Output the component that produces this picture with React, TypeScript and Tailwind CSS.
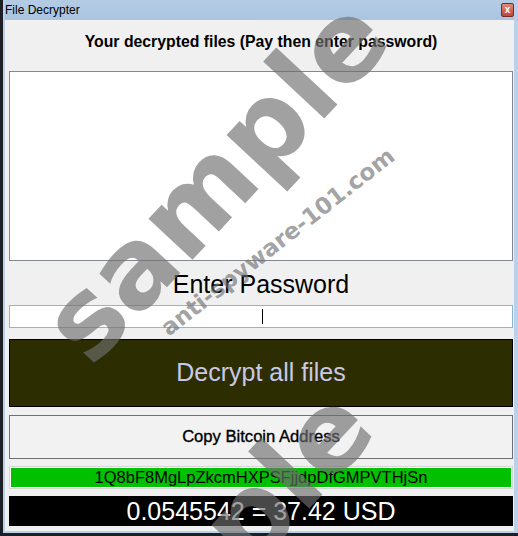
import React from "react";

const sans = { fontFamily: '"Liberation Sans", Arial, sans-serif' };

// big diagonal watermark on top of the window
function Watermark({ left, top }: { left: number; top: number }) {
  return (
    <div
      className="pointer-events-none absolute"
      style={{ left, top, width: 0, height: 0 }}
    >
      <span
        className="absolute block whitespace-nowrap text-[110px] font-bold leading-none text-[rgba(110,110,110,0.65)] -translate-x-1/2 -translate-y-1/2 -rotate-[47deg]"
        style={{ fontFamily: '"DejaVu Sans", Verdana, sans-serif', left: 0, top: 0 }}
      >
        sample
      </span>
      <span
        className="absolute block whitespace-nowrap text-[23px] font-bold leading-none text-[rgba(110,110,110,0.65)] -translate-x-1/2 -translate-y-1/2 -rotate-[38deg]"
        style={{ fontFamily: '"DejaVu Sans", Verdana, sans-serif', left: 63, top: 62 }}
      >
        anti-spyware-101.com
      </span>
    </div>
  );
}

export default function App() {
  return (
    <div className="relative h-[536px] w-[518px] overflow-hidden bg-[#1c1f24] pl-[3px]" style={sans}>
      <div className="flex h-[533px] w-[515px] flex-col border-b-2 border-l-2 border-r-4 border-[#b9d1ea]">
        {/* title bar */}
        <div className="flex h-[20px] shrink-0 items-center justify-between bg-gradient-to-b from-[#b4cbe4] to-[#aac4e1]">
          <span className="text-[12px] leading-none text-black">File Decrypter</span>
          <div className="flex h-[14px] w-[13px] items-center justify-center rounded-[2px] border border-[#7a2a22] bg-gradient-to-b from-[#e08a7a] to-[#c0443a] text-[10px] font-bold leading-none text-white">
            x
          </div>
        </div>

        {/* body */}
        <div className="flex flex-1 flex-col bg-[#f0f0f0] pl-[4px] pr-[1px]">
          <div className="h-[51px] pt-[13px] text-center text-[15.8px] font-bold leading-[18px] text-black">
            Your decrypted files (Pay then enter password)
          </div>

          <div className="h-[190px] border border-[#828790] bg-white" />

          <div className="h-[44px] pt-[8px] text-center text-[25px] leading-[30px] text-black">
            Enter Password
          </div>

          <div className="relative h-[23px] border border-[#8fb4dc] bg-white">
            <div className="absolute left-[252px] top-[3px] h-[15px] w-px bg-black" />
          </div>

          <div className="mt-[11px] flex h-[68px] items-center justify-center border border-black bg-[#2c2e02] text-[25px] text-[#c9c9e6]">
            Decrypt all files
          </div>

          <div className="mt-[8px] flex h-[44px] items-center justify-center border border-[#707070] bg-[#f2f2f2] text-[16.6px] text-black [-webkit-text-stroke:0.35px_black]">
            Copy Bitcoin Address
          </div>

          <div className="mt-[7px] h-[23px] border border-[#d6d6d6] bg-white p-px">
            <div className="flex h-full items-center justify-center bg-[#00c000] text-[16.5px] leading-none text-black">
              1Q8bF8MgLpZkcmHXPSFjjdpDfGMPVTHjSn
            </div>
          </div>

          <div className="mt-[7px] flex h-[30px] items-center justify-center bg-black text-[25px] leading-none text-white">
            0.0545542 = 37.42 USD
          </div>
        </div>
      </div>

      <Watermark left={215} top={180} />
      <Watermark left={200} top={570} />
    </div>
  );
}
